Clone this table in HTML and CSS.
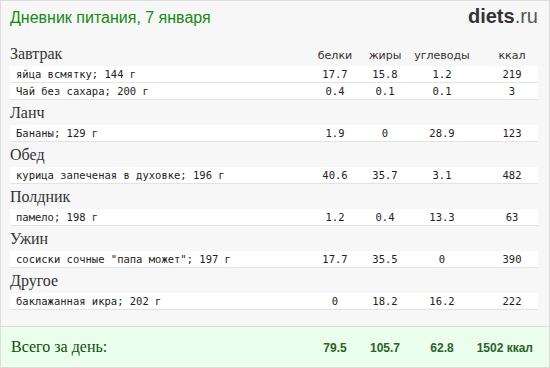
FILE: index.html
```html
<!DOCTYPE html>
<html lang="ru">
<head>
<meta charset="utf-8">
<title>Дневник питания, 7 января</title>
<link rel="stylesheet" href="styles.css">
</head>
<body>
<div class="page">
  <header class="top">
    <h1 class="title">Дневник питания, 7 января</h1>
    <div class="logo"><b>diets</b>.ru</div>
  </header>
  <div class="diary">
    <section class="meal">
      <div class="meal-head grid"><span class="meal-name">Завтрак</span><span class="c">белки</span><span class="c">жиры</span><span class="c">углеводы</span><span class="c last">ккал</span></div>
      <div class="row grid"><span class="food">яйца всмятку; 144 г</span><span class="c">17.7</span><span class="c">15.8</span><span class="c">1.2</span><span class="c last">219</span></div>
      <div class="row grid"><span class="food">Чай без сахара; 200 г</span><span class="c">0.4</span><span class="c">0.1</span><span class="c">0.1</span><span class="c last">3</span></div>
    </section>
    <section class="meal">
      <div class="meal-head grid"><span class="meal-name">Ланч</span></div>
      <div class="row grid"><span class="food">Бананы; 129 г</span><span class="c">1.9</span><span class="c">0</span><span class="c">28.9</span><span class="c last">123</span></div>
    </section>
    <section class="meal">
      <div class="meal-head grid"><span class="meal-name">Обед</span></div>
      <div class="row grid"><span class="food">курица запеченая в духовке; 196 г</span><span class="c">40.6</span><span class="c">35.7</span><span class="c">3.1</span><span class="c last">482</span></div>
    </section>
    <section class="meal">
      <div class="meal-head grid"><span class="meal-name">Полдник</span></div>
      <div class="row grid"><span class="food">памело; 198 г</span><span class="c">1.2</span><span class="c">0.4</span><span class="c">13.3</span><span class="c last">63</span></div>
    </section>
    <section class="meal">
      <div class="meal-head grid"><span class="meal-name">Ужин</span></div>
      <div class="row grid"><span class="food">сосиски сочные "папа может"; 197 г</span><span class="c">17.7</span><span class="c">35.5</span><span class="c">0</span><span class="c last">390</span></div>
    </section>
    <section class="meal">
      <div class="meal-head grid"><span class="meal-name">Другое</span></div>
      <div class="row grid"><span class="food">баклажанная икра; 202 г</span><span class="c">0</span><span class="c">18.2</span><span class="c">16.2</span><span class="c last">222</span></div>
    </section>
  </div>
  <footer class="total">
    <div class="grid total-grid"><span class="total-label">Всего за день:</span><span class="c">79.5</span><span class="c">105.7</span><span class="c">62.8</span><span class="kcal">1502 ккал</span></div>
  </footer>
</div>
</body>
</html>
```

FILE: styles.css
```css
html, body {
  margin: 0;
  padding: 0;
  background: #f7f7f7;
}

.page {
  width: 550px;
  height: 368px;
  box-sizing: border-box;
  border: 1px solid #dcdcdc;
  background: #f7f7f7;
  display: flex;
  flex-direction: column;
  overflow: hidden;
}

.top {
  height: 40px;
  box-sizing: border-box;
  padding: 5px 11px 0 9px;
  display: flex;
  justify-content: space-between;
  align-items: baseline;
}

.title {
  margin: 0;
  font: normal 16px/20px "Liberation Sans", Arial, sans-serif;
  color: #138a13;
}

.logo {
  font: normal 20px/20px "Liberation Sans", Arial, sans-serif;
  color: #555;
}

.logo b {
  font-weight: bold;
  color: #333;
}

.diary {
  padding: 0 11px 16px 9px;
  flex: 1;
}

.grid {
  display: grid;
  grid-template-columns: 1fr 50px 50px 64px 64px;
  align-items: baseline;
}

.c {
  text-align: center;
}

.last {
  padding-left: 12px;
}

.meal-head {
  height: 25px;
  line-height: 25px;
  font: normal 11px/25px "DejaVu Sans", Verdana, sans-serif;
  color: #333;
}

.meal-name {
  font: normal 16px/25px "Liberation Serif", "Times New Roman", serif;
  color: #333;
}

.row {
  height: 16px;
  background: #fff;
  border-bottom: 1px solid #e3e3e3;
  font: normal 10.5px/16px "DejaVu Sans Mono", monospace;
  color: #222;
}

.food {
  padding-left: 6px;
  white-space: nowrap;
}

.total {
  height: 40px;
  border-top: 1px solid #dcdcdc;
  background: #ebfdeb;
  padding: 0 11px 0 9px;
}

.total-grid {
  height: 40px;
  font: bold 12px/40px "Liberation Sans", Arial, sans-serif;
  color: #2b622b;
}

.total-label {
  font: normal 16px/40px "Liberation Serif", "Times New Roman", serif;
  color: #0d4f0d;
  padding-left: 1px;
}

.kcal {
  text-align: right;
  padding-right: 5px;
}
```
